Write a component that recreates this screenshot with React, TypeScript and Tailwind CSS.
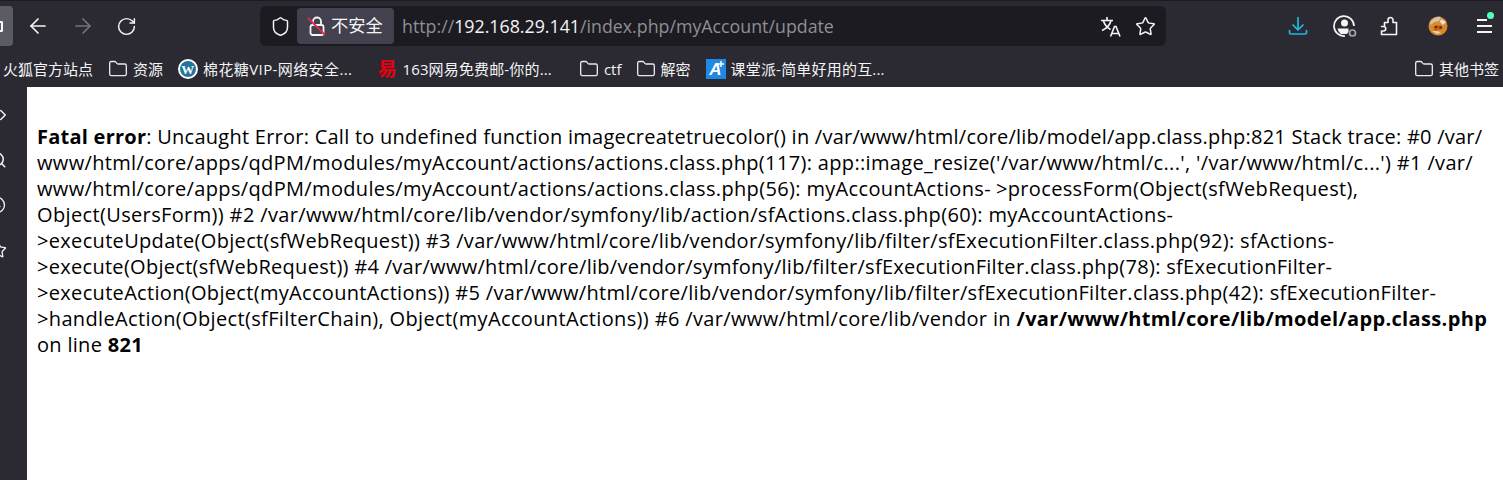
import React from 'react';
import { ArrowLeft, ArrowRight, RotateCw, Shield, Star, Folder, ChevronRight, Search, Clock } from 'lucide-react';

const uiFont = { fontFamily: '"Open Sans", "Noto Sans CJK SC", sans-serif' };

const LINES = [
    { cls: 'tracking-[0.25px]', text: <><b>Fatal error</b>: Uncaught Error: Call to undefined function imagecreatetruecolor() in /var/www/html/core/lib/model/app.class.php:821 Stack trace: #0 /var/</> },
    { cls: 'tracking-[0.34px]', text: <>www/html/core/apps/qdPM/modules/myAccount/actions/actions.class.php(117): app::image_resize('/var/www/html/c...', '/var/www/html/c...') #1 /var/</> },
    { cls: 'tracking-[0.345px]', text: <>www/html/core/apps/qdPM/modules/myAccount/actions/actions.class.php(56): myAccountActions-<span className="ml-[5px]">&gt;</span>processForm(Object(sfWebRequest),</> },
    { cls: 'tracking-[0.36px]', text: <>Object(UsersForm)) #2 /var/www/html/core/lib/vendor/symfony/lib/action/sfActions.class.php(60): myAccountActions-</> },
    { cls: 'tracking-[0.32px]', text: <>&gt;executeUpdate(Object(sfWebRequest)) #3 /var/www/html/core/lib/vendor/symfony/lib/filter/sfExecutionFilter.class.php(92): sfActions-</> },
    { cls: 'tracking-[0.29px]', text: <>&gt;execute(Object(sfWebRequest)) #4 /var/www/html/core/lib/vendor/symfony/lib/filter/sfExecutionFilter.class.php(78): sfExecutionFilter-</> },
    { cls: 'tracking-[0.32px]', text: <>&gt;executeAction(Object(myAccountActions)) #5 /var/www/html/core/lib/vendor/symfony/lib/filter/sfExecutionFilter.class.php(42): sfExecutionFilter-</> },
    { cls: 'tracking-[0.35px]', text: <>&gt;handleAction(Object(sfFilterChain), Object(myAccountActions)) #6 /var/www/html/core/lib/vendor in <b>/var/www/html/core/lib/model/app.class.php</b></> },
    { cls: 'tracking-[0.3px]', text: <>on line <b>821</b></> },
];

const FolderIcon = () => <Folder size={20} strokeWidth={1.6} className="text-[#e8e8ea] shrink-0" />;

const Bookmark: React.FC<{ icon?: React.ReactNode; label: string; className?: string }> = ({ icon, label, className }) => (
    <div className={`flex items-center gap-[5px] shrink-0 ${className ?? ''}`}>
        {icon}
        <span>{label}</span>
    </div>
);

const LockOff = () => (
    <svg width="20" height="22" viewBox="0 0 20 22" fill="none">
        <path d="M6 10V6.500a4 4 0 0 1 8 0V10" stroke="#f4f4f5" strokeWidth="1.800" />
        <rect x="3.500" y="10" width="13" height="10" rx="2" stroke="#f4f4f5" strokeWidth="1.800" />
        <path d="M1 3l17 17" stroke="#e22850" strokeWidth="1.800" />
    </svg>
);

const Translate = () => (
    <svg width="21" height="21" viewBox="0 0 21 21" fill="none" stroke="#f4f4f5" strokeWidth="1.600">
        <path d="M1 4.500h12M7 1v3.500M11 4.500c-1 4.500-4.500 8-9 10M3.500 5c1 3.500 3.500 6.500 7 8.500" />
        <path d="M10.500 20.500l4-10h1.500l4 10M12 17.500h7" />
    </svg>
);

const Download = () => (
    <svg width="20" height="20" viewBox="0 0 20 20" fill="none" stroke="#22b8e0" strokeWidth="1.700" strokeLinecap="round" strokeLinejoin="round">
        <path d="M10 1.500v12M5 9l5 5 5-5" />
        <path d="M1.500 14.500v2a1.500 1.500 0 0 0 1.500 1.500h14a1.500 1.500 0 0 0 1.500-1.500v-2" />
    </svg>
);

const Account = () => (
    <svg width="24" height="24" viewBox="0 0 24 24" fill="none">
        <path d="M21 12a10 10 0 1 0-9 10" stroke="#f4f4f5" strokeWidth="1.700" />
        <circle cx="11.500" cy="9" r="3.500" fill="#f4f4f5" />
        <path d="M4.500 14.500h11v3c-.5 1-1 2-2 2.500H8c-1.500-1-3-3-3.500-5.500z" fill="#f4f4f5" />
        <circle cx="19.500" cy="19" r="3" stroke="#a5a5ab" strokeWidth="1.700" />
    </svg>
);

const PuzzleIcon = () => (
    <svg width="18" height="20" viewBox="0 0 18 20" fill="none" stroke="#f4f4f5" strokeWidth="1.600" strokeLinejoin="round">
        <path d="M1.500 10.500h3V6.500h3.500V4a2.500 2.500 0 1 1 5 0v2.500h3.500v12H1.500v-3.500h2a1.700 1.700 0 0 0 0-4.500H1.500z" />
    </svg>
);

const Avatar = () => (
    <svg width="20" height="20" viewBox="0 0 20 20">
        <circle cx="10" cy="10" r="9.500" fill="#d98a2b" />
        <path d="M2 7c2-4 7-7 11-6l-2 4-5 1-3 3z" fill="#cfc6b4" />
        <path d="M13 3l5 3-3 3-3-3z" fill="#e9e4da" />
        <path d="M5 11l4-2 5 1 1 3-5 1-3 2z" fill="#c8620f" />
        <circle cx="8" cy="11" r="1.200" fill="#4a2a10" />
        <circle cx="12.500" cy="11.500" r="1.200" fill="#4a2a10" />
        <path d="M4 15l5 3 4-1-3-2z" fill="#d9d2c4" />
    </svg>
);

const Wordpress = () => (
    <div className="w-5 h-5 rounded-full bg-[#21759b] border-2 border-white flex items-center justify-center text-white text-[13px] leading-none font-bold shrink-0" style={{ fontFamily: '"Liberation Serif", serif' }}>W</div>
);

const Netease = () => (
    <div className="w-5 h-5 flex items-center justify-center text-[#e60012] text-[19px] leading-none font-bold shrink-0">易</div>
);

const KeTang = () => (
    <div className="relative w-5 h-5 bg-[#1e88e5] flex items-center justify-center text-white text-[17px] leading-none font-bold italic shrink-0" style={{ fontFamily: '"Liberation Sans", sans-serif' }}>
        A
        <svg width="6" height="6" viewBox="0 0 6 6" className="absolute top-[2px] right-[2px]">
            <path d="M3 0v6M0 3h6" stroke="#fff" strokeWidth="1.500" />
        </svg>
    </div>
);

const App: React.FC = () => {
    return (
        <div className="h-[480px] w-full bg-white flex flex-col overflow-hidden" style={uiFont}>
            <div className="h-[87px] shrink-0 bg-[#2b2a33] border-t border-[#1c1b22] flex flex-col text-[#f4f4f5]">
                <div className="h-10 mt-[5px] mb-[5px] flex items-center shrink-0">
                    <div className="w-[13px] h-10 bg-[#5b5b66] rounded-r-[4px] shrink-0 flex items-center">
                        <div className="w-[3px] h-[11px] border-2 border-l-0 border-white rounded-r-[2px]"></div>
                    </div>
                    <div className="w-[247px] flex items-center pl-[13px] gap-[21px] shrink-0">
                        <ArrowLeft size={24} strokeWidth={1.700} />
                        <ArrowRight size={24} strokeWidth={1.700} className="text-[#74737a]" />
                        <RotateCw size={21} strokeWidth={1.700} />
                    </div>
                    <div className="w-[906px] h-10 bg-[#1c1b22] rounded-[6px] flex items-center shrink-0">
                        <Shield size={21} strokeWidth={1.700} className="ml-[10px] shrink-0" />
                        <div className="ml-[6px] w-[97px] h-9 bg-[#42414d] rounded-[4px] flex items-center pl-[10px] gap-[4px] shrink-0">
                            <LockOff />
                            <span className="text-[17.300px]">不安全</span>
                        </div>
                        <div className="ml-2 text-[17.800px] text-[#8f8f94] whitespace-nowrap flex-1">
                            http://<span className="text-[#f4f4f5]">192.168.29.141</span>/index.php/myAccount/update
                        </div>
                        <Translate />
                        <Star size={21} strokeWidth={1.700} className="ml-[14px] mr-[10px] shrink-0" />
                    </div>
                    <div className="flex-1 flex items-center pl-[122px] gap-[25px]">
                        <Download />
                        <Account />
                        <div className="-ml-[2px]"><PuzzleIcon /></div>
                        <div className="ml-[5px]"><Avatar /></div>
                        <div className="relative ml-[4px] flex flex-col gap-[4px] w-[15px]">
                            <div className="h-[2px] w-[10px] bg-[#f4f4f5]"></div>
                            <div className="h-[2px] bg-[#f4f4f5]"></div>
                            <div className="h-[2px] bg-[#f4f4f5]"></div>
                            <div className="absolute -top-[7px] -right-[2px] w-[7px] h-[7px] rounded-full bg-[#54ffbd]"></div>
                        </div>
                    </div>
                </div>
                <div className="flex-1 flex items-center text-[15px] pl-[3px] pr-[4px] whitespace-nowrap">
                    <Bookmark label="火狐官方站点" />
                    <Bookmark icon={<FolderIcon />} label="资源" className="ml-[15px]" />
                    <Bookmark icon={<Wordpress />} label="棉花糖VIP-网络安全..." className="ml-[15px] tracking-[0.4px]" />
                    <Bookmark icon={<Netease />} label="163网易免费邮-你的..." className="ml-[25px] tracking-[0.15px]" />
                    <Bookmark icon={<FolderIcon />} label="ctf" className="ml-[27px]" />
                    <Bookmark icon={<FolderIcon />} label="解密" className="ml-[14px]" />
                    <Bookmark icon={<KeTang />} label="课堂派-简单好用的互..." className="ml-[15px] tracking-[0.2px]" />
                    <Bookmark icon={<FolderIcon />} label="其他书签" className="ml-auto" />
                </div>
            </div>
            <div className="flex-1 flex min-h-0">
                <div className="w-[27px] shrink-0 bg-[#2b2a33] text-[#f4f4f5] flex flex-col items-start overflow-hidden pt-[19px] gap-[27px]">
                    <ChevronRight size={18} strokeWidth={2} className="-ml-[6px]" />
                    <Search size={18} strokeWidth={2} className="-ml-[11px]" />
                    <Clock size={18} strokeWidth={1.800} className="-ml-[12px]" />
                    <Star size={18} strokeWidth={1.800} className="-ml-[11px]" />
                </div>
                <div className="flex-1 pt-[37px] pl-[10px] text-[20px] leading-[26px] text-black whitespace-nowrap overflow-hidden">
                    {LINES.map((line, i) => (
                        <div key={i} className={line.cls}>{line.text}</div>
                    ))}
                </div>
            </div>
        </div>
    );
};

export default App;
